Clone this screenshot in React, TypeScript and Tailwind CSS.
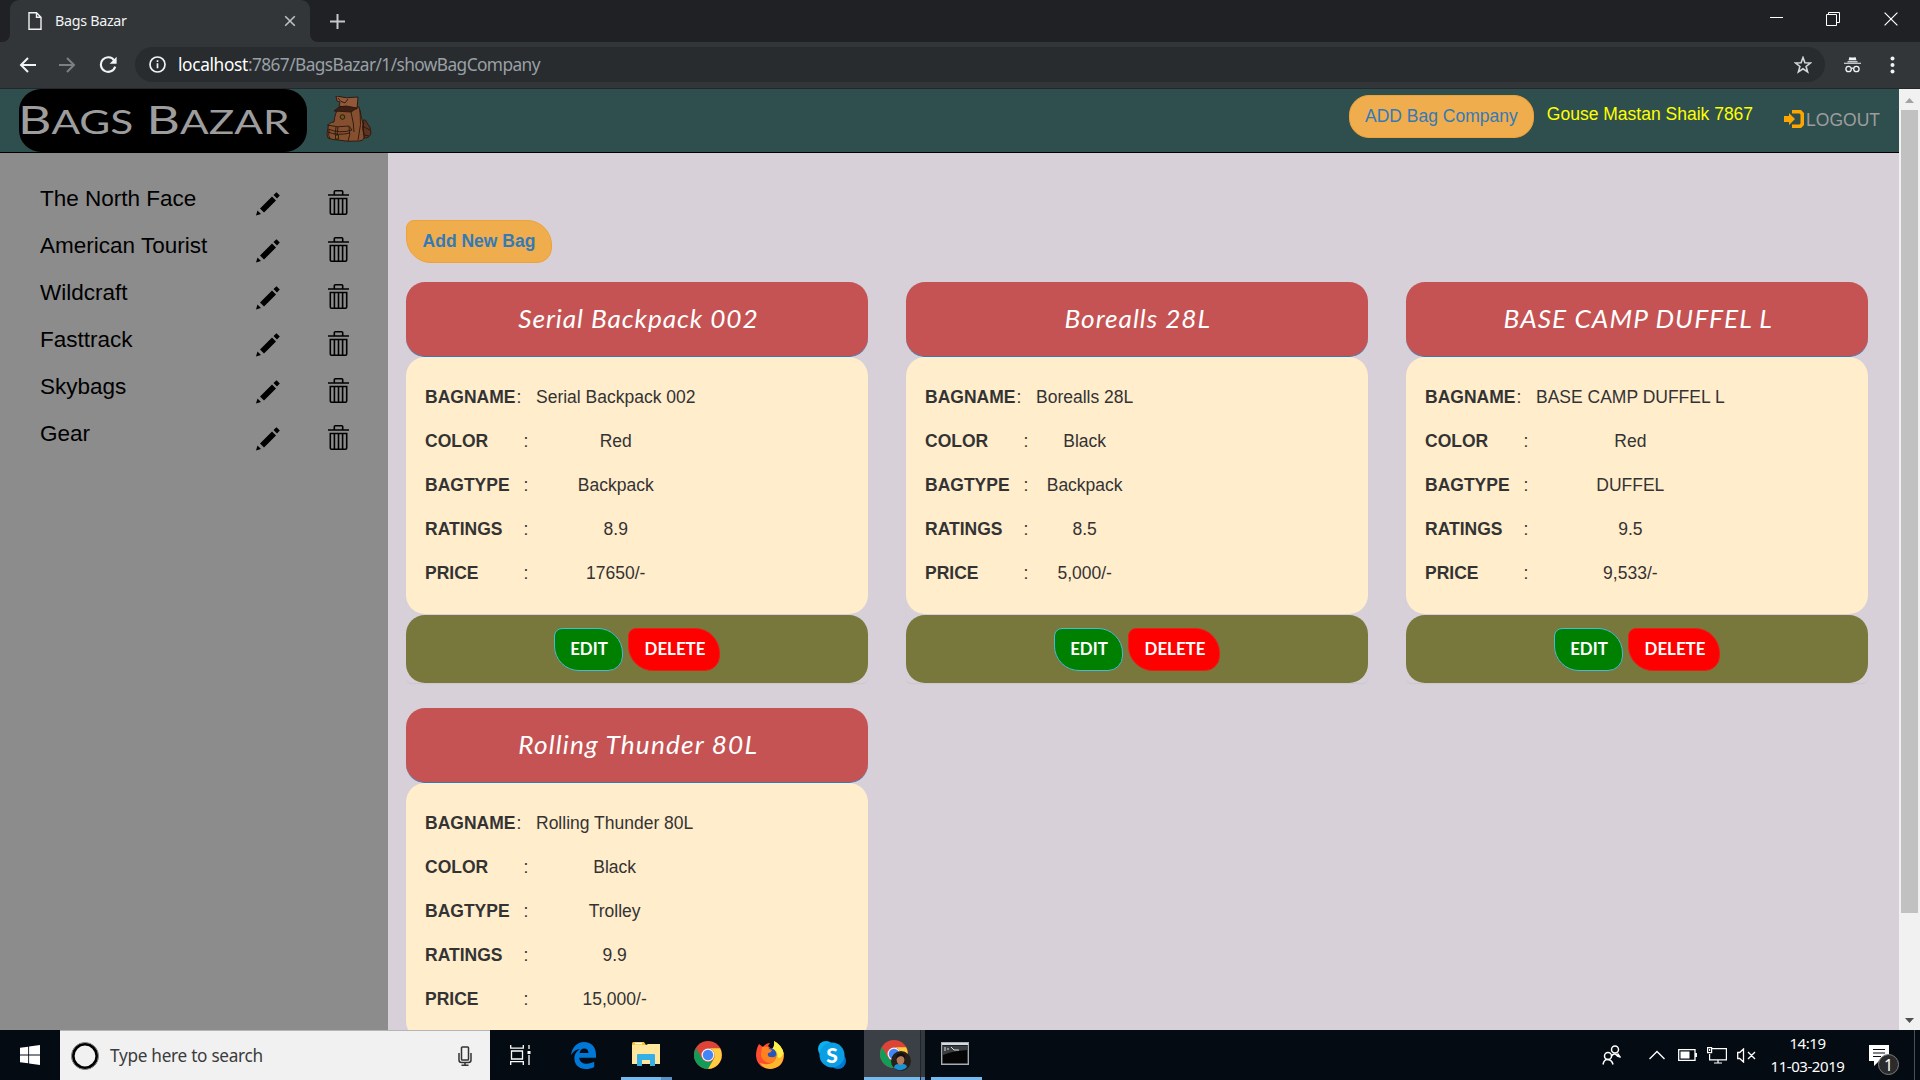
import React from "react";

type Bag = {
  name: string;
  color: string;
  type: string;
  ratings: string;
  price: string;
  titleClass: string;
  actions: boolean;
};

const companies = ["The North Face", "American Tourist", "Wildcraft", "Fasttrack", "Skybags", "Gear"];

const bags: Bag[] = [
  { name: "Serial Backpack 002", color: "Red", type: "Backpack", ratings: "8.9", price: "17650/-", titleClass: "tracking-[0.86px]", actions: true },
  { name: "Borealls 28L", color: "Black", type: "Backpack", ratings: "8.5", price: "5,000/-", titleClass: "tracking-[0.9px]", actions: true },
  { name: "BASE CAMP DUFFEL L", color: "Red", type: "DUFFEL", ratings: "9.5", price: "9,533/-", titleClass: "tracking-[1px]", actions: true },
  { name: "Rolling Thunder 80L", color: "Black", type: "Trolley", ratings: "9.9", price: "15,000/-", titleClass: "tracking-[1.1px]", actions: false },
];

function BrowserChrome() {
  return (
    <div className="h-[89px] shrink-0 bg-[#202124] font-['Noto_Sans',sans-serif]">
      <div className="flex h-[42px] items-stretch">
        <div className="flex w-[10px] items-end bg-[#323639]">
          <div className="h-full w-full rounded-br-[8px] bg-[#202124]" />
        </div>
        <div className="w-[300px] bg-[#202124]">
          <div className="flex h-full items-center rounded-t-[9px] bg-[#323639] pl-[17px] pr-[14px]">
            <svg width="16" height="20" viewBox="0 0 16 20" fill="none" stroke="#f1f1f1" strokeWidth="1.4">
              <path d="M2 1.7h7.5l4.5 4.5v12.1H2zM9.5 1.7v4.5H14" />
            </svg>
            <span className="ml-[12px] grow whitespace-nowrap text-[14.3px] tracking-[-0.3px] text-[#f1f3f4]">Bags Bazar</span>
            <svg width="12" height="12" viewBox="0 0 12 12" stroke="#bdc1c6" strokeWidth="1.6">
              <path d="M1.2 1.2l9.6 9.6M10.8 1.2l-9.6 9.6" />
            </svg>
          </div>
        </div>
        <div className="w-[10px] bg-[#323639]">
          <div className="h-full w-full rounded-bl-[8px] bg-[#202124]" />
        </div>
        <div className="flex grow items-center pl-[9px]">
          <svg width="17" height="17" viewBox="0 0 17 17" stroke="#c4c7cb" strokeWidth="2">
            <path d="M8.5 1v15M1 8.5h15" />
          </svg>
        </div>
        <div className="flex items-center pr-[22px] pb-[5px]">
          <svg width="13" height="14" viewBox="0 0 13 14" stroke="#fff" strokeWidth="1">
            <path d="M0 5.500h13" />
          </svg>
          <svg className="ml-[43px]" width="14" height="14" viewBox="0 0 14 14" fill="none" stroke="#fff" strokeWidth="1">
            <path d="M.5 2.500h10v11H.5zM2.500 2.500V.5h11v10h-3" />
          </svg>
          <svg className="ml-[44px]" width="14" height="14" viewBox="0 0 14 14" stroke="#fff" strokeWidth="1.2">
            <path d="M.6.6l12.8 12.8M13.4.6L.6 13.4" />
          </svg>
        </div>
      </div>
      <div className="flex h-[47px] items-start border-b border-[#25282a] bg-[#323639] pt-[5px]">
        <div className="flex h-[35px] w-[135px] items-center pl-[19px]">
          <svg width="17" height="16" viewBox="0 0 17 16" fill="none" stroke="#f1f3f4" strokeWidth="2">
            <path d="M17 8H2M9 1L2 8l7 7" />
          </svg>
          <svg className="ml-[23px]" width="17" height="16" viewBox="0 0 17 16" fill="none" stroke="#7d8083" strokeWidth="2">
            <path d="M0 8h15M8 1l7 7-7 7" />
          </svg>
          <svg className="ml-[23px]" width="18" height="18" viewBox="0 0 18 18" fill="none" stroke="#f1f3f4" strokeWidth="2.1">
            <path d="M15.3 4.6A7.3 7.3 0 1 0 16.2 10.6" />
            <path d="M17.6 .8v7h-7z" fill="#f1f3f4" stroke="none" />
          </svg>
        </div>
        <div className="flex h-[35px] w-[1690px] items-center rounded-full bg-[#282c2f] pl-[14px] pr-[13px]">
          <svg width="17" height="17" viewBox="0 0 17 17" fill="none" stroke="#f1f3f4" strokeWidth="1.7">
            <circle cx="8.5" cy="8.5" r="7.5" />
            <path d="M8.5 7.3v5M8.5 4.3v1.8" />
          </svg>
          <span className="ml-[12px] grow whitespace-nowrap text-[17.3px] tracking-[-0.58px] text-[#9aa0a6]">
            <span className="tracking-[-0.35px] text-white">localhost</span>:7867/BagsBazar/1/showBagCompany
          </span>
          <svg width="18" height="18" viewBox="0 0 18 18" fill="none" stroke="#d5d7d9" strokeWidth="1.6">
            <path d="M9 1.6l1.900 5.200 5.500.2-4.300 3.500 1.500 5.400L9 12.800l-4.600 3.100 1.500-5.400L1.600 7l5.500-.2z" />
          </svg>
        </div>
        <div className="flex h-[35px] items-center pl-[19px]">
          <svg width="17" height="17" viewBox="0 0 17 17" fill="none" stroke="#f1f3f4" strokeWidth="1.3">
            <path d="M5.500 1l1.500.4h3l1.500-.4 1 3.200h-8zM3.500 5.200h10v1h-10zM0 6.800h17v1H0z" fill="#f1f3f4" stroke="none" />
            <circle cx="4.6" cy="13" r="2.700" />
            <circle cx="12.4" cy="13" r="2.700" />
            <path d="M7.3 12.5q1.2-.8 2.4 0" />
          </svg>
          <svg className="ml-[29px]" width="5" height="18" viewBox="0 0 5 18" fill="#f1f3f4">
            <circle cx="2.5" cy="2.4" r="2" />
            <circle cx="2.5" cy="9" r="2" />
            <circle cx="2.5" cy="15.6" r="2" />
          </svg>
        </div>
      </div>
    </div>
  );
}

function BackpackLogo() {
  return (
    <svg width="46" height="46" viewBox="0 0 46 46" stroke="#2b150c" strokeWidth=".9" strokeLinejoin="round">
      <path d="M37 24q3-1 4 3 4 4 4 10-1 5-7 5z" fill="#5d3420" />
      <path d="M13 12q-4 4-5 14-6 0-6 6-2 7 0 10 5 2 10 2 9 2 21 1 4 0 5-3 0-14-4-27L33 11z" fill="#85502f" />
      <path d="M10 0q10 3 22 1l-1 12-18-3 1-4-3-1z" fill="#91583a" />
      <path d="M13 11l7-1 11 2-6 4-17-1z" fill="#3d2013" />
      <path d="M25 16q3 12 3 20M34 14q2 14-2 30M1 29q10 3 22 1l3 4q-12 4-24-1M3 34q-1 6 1 9M23 31q2 8-1 14M10 31l-1 8M12 31l-1 8M38 26q-3 6 0 13l5 1M36 30l8 4M12 2q2 4 7 5l3-4M2 36q9 4 22 1" fill="none" />
      <circle cx="16.500" cy="21" r="2.300" fill="#6a5a1c" />
      <path d="M9.500 39h3v4h-3z" fill="#776316" />
    </svg>
  );
}

function Header() {
  return (
    <header className="flex h-[64px] shrink-0 items-start border-b border-black bg-[#2f4f4f]">
      <div className="ml-[19px] flex h-[63px] w-[288px] items-center rounded-[22px] bg-black">
        <span className="ml-[-1px] origin-left scale-x-[1.325] whitespace-nowrap pb-[2px] font-['Lato',sans-serif] text-[39px] leading-none font-normal text-[#9d9d9d]">
          B<span className="text-[32px]">AGS</span> B<span className="text-[32px]">AZAR</span>
        </span>
      </div>
      <div className="ml-[19px] pt-[7px]">
        <BackpackLogo />
      </div>
      <div className="flex grow justify-end text-[17.5px] leading-[25px]">
        <button className="mt-[6px] h-[43px] w-[185px] rounded-[20px] border border-[#eea236] bg-[#f0ad4e] text-[#337ab7]">ADD Bag Company</button>
        <span className="mt-[13px] ml-[13px] text-[#ffff00]">Gouse Mastan Shaik 7867</span>
        <span className="mt-[19px] ml-[31px] mr-[19px] flex text-[#9d9d9d]">
          <svg className="mt-[2px] mr-[2px]" width="20" height="18" viewBox="0 0 20 18" fill="#ffa500">
            <path d="M0 6h5V3l6 6-6 6v-3H0z" />
            <path d="M8 0h9l3 3v12l-3 3H8v-3.500h7.500l1-1v-9l-1-1H8z" />
          </svg>
          LOGOUT
        </span>
      </div>
    </header>
  );
}

function Sidebar() {
  return (
    <aside className="w-[388px] shrink-0 bg-[#8c8c8c] pt-[23px] text-[22.5px] text-black">
      {companies.map((c) => (
        <div key={c} className="flex h-[47px] items-center pl-[40px] pr-[39px]">
          <span className="grow pb-[1px]">{c}</span>
          <svg className="mt-[8px] mr-[48px]" width="24" height="24" viewBox="0 0 24 24">
            <path d="M0 23.500l1.500-5L5 22zM4 16.500L16 4.500l4 4L8 20.500zM17.500 3L20.500.2l3.300 3.300-2.800 3z" />
          </svg>
          <svg className="mt-[6px]" width="21" height="25" viewBox="0 0 21 25" fill="none" stroke="#000" strokeWidth="1.6">
            <path d="M0 5h21M6.300 5V1.800q0-1 1-1h6.400q1 0 1 1V5M2.300 8.500h16.400v14.500q0 1.200-1.200 1.200h-14q-1.200 0-1.200-1.200zM6.400 8.500v15.500M10.500 8.500v15.500M14.600 8.500v15.500" />
          </svg>
        </div>
      ))}
    </aside>
  );
}

function Row({ label, value, tight }: { label: string; value: string; tight?: boolean }) {
  return (
    <>
      <b>{label}</b>
      <span className={tight ? "pl-0" : "pl-[7px]"}>:</span>
      <span className="text-center">{value}</span>
    </>
  );
}

function BagCard({ bag }: { bag: Bag }) {
  return (
    <article className="w-[462px] rounded-[5px] shadow-[0_1px_1px_rgba(0,0,0,0.05)]">
      <div className="flex h-[75px] items-center justify-center rounded-[19px] border-b border-[#337ab7] bg-[#c55353] pl-[2px]">
        <h3 className={`scale-x-[1.05] whitespace-nowrap font-['Lato',sans-serif] text-[25px] font-normal text-white italic ${bag.titleClass}`}>{bag.name}</h3>
      </div>
      <div className="h-[257px] rounded-[19px] bg-[#ffedcc] pt-[18px] pl-[19px] text-[17.5px] text-[#333]">
        <div className="grid w-max auto-rows-[44px] grid-cols-[91.5px_19.5px_auto] items-center whitespace-nowrap">
          <Row label="BAGNAME" value={bag.name} tight />
          <Row label="COLOR" value={bag.color} />
          <Row label="BAGTYPE" value={bag.type} />
          <Row label="RATINGS" value={bag.ratings} />
          <Row label="PRICE" value={bag.price} />
        </div>
      </div>
      {bag.actions && (
        <div className="mt-px flex h-[68px] items-start justify-center gap-[5px] rounded-[19px] bg-[#78783c] pt-[13px] font-['Lato',sans-serif] text-[16.9px] font-bold text-white">
          <button className="h-[43px] w-[69px] rounded-[8px_25px_15px_25px] border border-[#46b8da] bg-[#008000] pb-[2px] pl-[1px]">EDIT</button>
          <button className="h-[43px] w-[92px] rounded-[8px_25px_15px_25px] border border-[#e8201c] bg-[#ff0000] pb-[2px] pl-[2px]">DELETE</button>
        </div>
      )}
    </article>
  );
}

function Scrollbar() {
  return (
    <div className="flex w-[21px] shrink-0 flex-col items-center bg-[#f1f1f1]">
      <svg className="h-[21px] shrink-0" width="21" height="21" viewBox="0 0 21 21" fill="#a3a3a3">
        <path d="M6 14l4.500-5 4.500 5z" />
      </svg>
      <div className="h-[803px] w-[17px] bg-[#c1c1c1]" />
      <div className="grow" />
      <svg className="h-[21px] shrink-0" width="21" height="21" viewBox="0 0 21 21" fill="#505050">
        <path d="M6 9h9l-4.500 5z" />
      </svg>
    </div>
  );
}

function ChromeIcon() {
  return (
    <svg width="28" height="28" viewBox="0 0 28 28">
      <circle cx="14" cy="14" r="14" fill="#db4437" />
      <path d="M1.900 7A14 14 0 0 0 14 28l6-10.500A7 7 0 0 1 8 17.500z" fill="#0f9d58" />
      <path d="M14 28A14 14 0 0 0 26.100 7.300H14a7 7 0 0 1 6 10.200z" fill="#ffcd40" />
      <circle cx="14" cy="14" r="6.500" fill="#f1f1f1" />
      <circle cx="14" cy="14" r="5.200" fill="#4285f4" />
    </svg>
  );
}

function Taskbar() {
  return (
    <footer className="flex h-[50px] shrink-0 items-stretch bg-[#050b13] font-['Noto_Sans',sans-serif] text-white">
      <div className="flex w-[60px] items-center justify-center">
        <svg width="20" height="20" viewBox="0 0 20 20" fill="#fff">
          <path d="M0 2.800L8.200 1.700v7.800H0zM9.100 1.500L20 0v9.500H9.100zM0 10.400h8.200v7.900L0 17.200zM9.100 10.400H20V20L9.100 18.500z" />
        </svg>
      </div>
      <div className="flex w-[430px] items-center border-t border-[#b5b5b5] bg-[#f1f1f1] pl-[11px] pr-[18px]">
        <svg width="28" height="28" viewBox="0 0 28 28" fill="none">
          <circle cx="14" cy="14" r="12" stroke="#000" strokeWidth="3.200" />
          <circle cx="14" cy="14" r="13.500" stroke="#8a8a8a" strokeWidth="1" />
        </svg>
        <span className="ml-[11px] grow text-[17.200px] tracking-[-0.28px] text-[#3b3b3b]">Type here to search</span>
        <svg width="14" height="20" viewBox="0 0 14 20" fill="none" stroke="#333" strokeWidth="1.500">
          <rect x="3.500" y="1" width="7" height="13" rx=".8" />
          <path d="M1 7v7q0 2.500 2.500 2.500h7Q13 16.500 13 14V7M7 16.500V19M3.500 19.200h7" />
        </svg>
      </div>
      <div className="flex w-[62px] items-center justify-center pr-[2px]">
        <svg width="21" height="20" viewBox="0 0 21 20" fill="none" stroke="#fff" strokeWidth="1.300">
          <path d="M.7 0v3.200h12.600V0M.7 20v-3.300h12.600V20M1.500 6h11v8h-11zM19 0v4M19 10v10" />
          <path d="M17.500 6h3v3h-3z" fill="#fff" stroke="none" />
        </svg>
      </div>
      <div className="flex w-[64px] items-center justify-center pr-[1px]">
        <svg width="25" height="27" viewBox="0 0 25 27" fill="#0078d7">
          <path d="M0 13.300C.8 5.500 6 0 13 0c7.400 0 12 5.200 12 12.400v3.300H8.300c.2 4 3.400 6 7.600 6 2.700 0 5-.8 7.300-2.200v5.400C20.800 26.300 18 27 14.600 27 8 27 3.400 23 3.400 16.600c0-4.400 2.300-7.800 6-9.600C5.300 7.200 2 9.500 0 13.300zm8.600-2.200h8.900c0-3-1.500-4.700-4.300-4.700-2.500 0-4.100 1.800-4.600 4.700z" />
        </svg>
      </div>
      <div className="flex w-[60px] flex-col pl-[5px]">
        <div className="flex grow items-center pl-[11px]">
          <svg width="28" height="24" viewBox="0 0 28 24">
            <path d="M0 1.500Q0 0 1.500 0H12l2 3H0z" fill="#f7c331" />
            <path d="M0 3h14l2-1h12v20H0z" fill="#ffe69c" />
            <path d="M3 1.500h7" stroke="#fff" strokeWidth="1.500" />
            <path d="M5 24V13q0-1 1-1h16q1 0 1 1v11h-5v-6h-8v6z" fill="#35b0e6" />
          </svg>
        </div>
        <div className="flex h-[3px] w-[51px] bg-[#5c8fc2]">
          <div className="w-[40px] bg-[#76b9ed]" />
        </div>
      </div>
      <div className="flex w-[62px] items-center pl-[18px]">
        <ChromeIcon />
      </div>
      <div className="flex w-[62px] items-center pl-[18px]">
        <svg width="28" height="28" viewBox="0 0 28 28">
          <path d="M3 3l4 3q3-4 7-4l-2 3q3 2 4 5l8-4q4 4 4 9-1 12-14 13Q1 27 0 15 0 8 3 3z" fill="#ff4b32" />
          <path d="M18 0q8 4 9.700 12.500Q28 27 14 28q-8-1-10-6 12 4 16-5 1-6-4-9 3-3 2-8z" fill="#ffb52c" />
          <path d="M18 0q8 4 9.500 12.500-4 7-6 3Q22 9 16 8q3-3 2-8z" fill="#fff04a" />
          <circle cx="14" cy="13.500" r="6.500" fill="#2556bd" />
          <path d="M6 6q3-1 6 0l1 2 3 1q-1 3-4 3-1 4 3 4 4 1 5-2 0 8-7 8-8-2-8-9z" fill="#ff821e" />
        </svg>
      </div>
      <div className="flex w-[76px] items-center pl-[18px]">
        <svg width="28" height="28" viewBox="0 0 28 28">
          <circle cx="8" cy="8" r="8" fill="#0cb1ee" />
          <circle cx="20" cy="20" r="8" fill="#0078d4" />
          <circle cx="14" cy="14" r="12.500" fill="#0a9fe4" />
          <text x="14" y="21.500" textAnchor="middle" fontFamily="Lato" fontWeight="900" fontSize="21" fill="#fff">S</text>
        </svg>
      </div>
      <div className="ml-[-12px] flex w-[61px]">
        <div className="flex w-[56px] flex-col bg-[#3b4047]">
          <div className="flex grow items-center pl-[16px]">
            <div className="relative">
              <ChromeIcon />
              <svg className="absolute top-[11px] left-[11px]" width="20" height="20" viewBox="0 0 20 20">
                <circle cx="10" cy="10" r="10" fill="#252019" />
                <path d="M3 17q0-4 5-4 7-1 8 3-5 6-13 1z" fill="#1593d8" />
                <ellipse cx="9.500" cy="8.500" rx="3.900" ry="5.400" fill="#b47c5c" />
                <path d="M5 8q0-6 5-6t4 6q-2-3-4-3T5 8z" fill="#15110e" />
              </svg>
            </div>
          </div>
          <div className="h-[3px] bg-[#76b9ed]" />
        </div>
        <div className="flex w-[5px] items-end border-l border-[#20252b] bg-[#343940]">
          <div className="h-[3px] w-full bg-[#5c8fc2]" />
        </div>
      </div>
      <div className="ml-[6px] flex w-[51px] flex-col">
        <div className="flex grow items-center pl-[10px]">
          <svg width="28" height="23" viewBox="0 0 28 23">
            <path d="M.700.700h26.600v21.600H.700z" fill="#050505" stroke="#a7adb3" strokeWidth="1.400" />
            <path d="M1 1h26v2H1z" fill="#d5dae0" />
            <path d="M2 13Q11 9 26 8V3.500H2z" fill="#3b3f43" />
            <path d="M3 6h2M3 8h2M7 6v2M10 5l3 3h5" stroke="#ddd" fill="none" />
          </svg>
        </div>
        <div className="h-[3px] bg-[#76b9ed]" />
      </div>
      <div className="flex grow items-center justify-end">
        <svg width="19" height="20" viewBox="0 0 19 20" fill="none" stroke="#fff" strokeWidth="1.500">
          <circle cx="13" cy="4.500" r="3.500" />
          <path d="M9.500 11q3-4 6 0l2.800 1M15.500 8.500l3 4" />
          <circle cx="6" cy="11" r="3.500" />
          <path d="M1 19.500q1-5.500 5-5t5 5" />
        </svg>
        <svg className="ml-[28px]" width="16" height="10" viewBox="0 0 16 10" fill="none" stroke="#fff" strokeWidth="1.400">
          <path d="M.5 9L8 1.500 15.500 9" />
        </svg>
        <svg className="ml-[13px]" width="19" height="12" viewBox="0 0 19 12" fill="none" stroke="#fff" strokeWidth="1.300">
          <path d="M.700.700h16.300v10.600H.700zM18.300 4v4" />
          <path d="M2.500 2.500h9v7h-9z" fill="#fff" stroke="none" />
        </svg>
        <svg className="ml-[10px]" width="20" height="17" viewBox="0 0 20 17" fill="none" stroke="#fff" strokeWidth="1.200">
          <path d="M5 1.600h14.400v11.200H2.600V7M11 13v3M7 16h8M.6.6h4v5h-4zM2.600 2v2" />
        </svg>
        <svg className="ml-[10px]" width="19" height="15" viewBox="0 0 19 15" fill="none" stroke="#fff" strokeWidth="1.300">
          <path d="M.7 4.500h2L6.500 1v13L2.700 10.500h-2zM11 4l7 7M18 4l-7 7" />
        </svg>
        <div className="ml-[13px] flex w-[77px] flex-col items-center text-[15px] leading-[23px] tracking-[-0.45px]">
          <span>14:19</span>
          <span className="whitespace-nowrap">11-03-2019</span>
        </div>
        <div className="relative ml-[23px] h-[30px] w-[45px]">
          <svg width="20" height="22" viewBox="0 0 20 22" className="mt-[5px]">
            <path d="M0 0h20v16H10l-5 5v-5H0z" fill="#fff" />
            <path d="M4 4.500h12M4 8h12M4 11.500h8" stroke="#050b13" strokeWidth="1.200" />
          </svg>
          <span className="absolute top-[14px] left-[9px] flex h-[21px] w-[21px] items-center justify-center rounded-full border border-[#7c7c7c] bg-[#2b2b2b] text-[16px]">1</span>
        </div>
        <div className="h-full w-[6px] border-l border-[#4a4f55]" />
      </div>
    </footer>
  );
}

export default function App() {
  return (
    <div className="flex h-[1080px] w-[1920px] flex-col overflow-hidden font-['Liberation_Sans',Arial,sans-serif]">
      <BrowserChrome />
      <div className="flex h-[941px] shrink-0">
        <div className="flex w-[1899px] flex-col overflow-hidden">
          <Header />
          <div className="flex h-[877px]">
            <Sidebar />
            <main className="grow overflow-hidden bg-[#d7d0d8] pt-[67px] pl-[18px]">
              <button className="block h-[43px] w-[146px] rounded-[8px_25px_15px_25px] border border-[#eea236] bg-[#f0ad4e] pb-[1px] text-[17.500px] font-bold text-[#337ab7]">
                Add New Bag
              </button>
              <div className="mt-[19px] grid grid-cols-[462px_462px_462px] gap-x-[38px] gap-y-[25px]">
                {bags.map((b) => (
                  <BagCard key={b.name} bag={b} />
                ))}
              </div>
            </main>
          </div>
        </div>
        <Scrollbar />
      </div>
      <Taskbar />
    </div>
  );
}
